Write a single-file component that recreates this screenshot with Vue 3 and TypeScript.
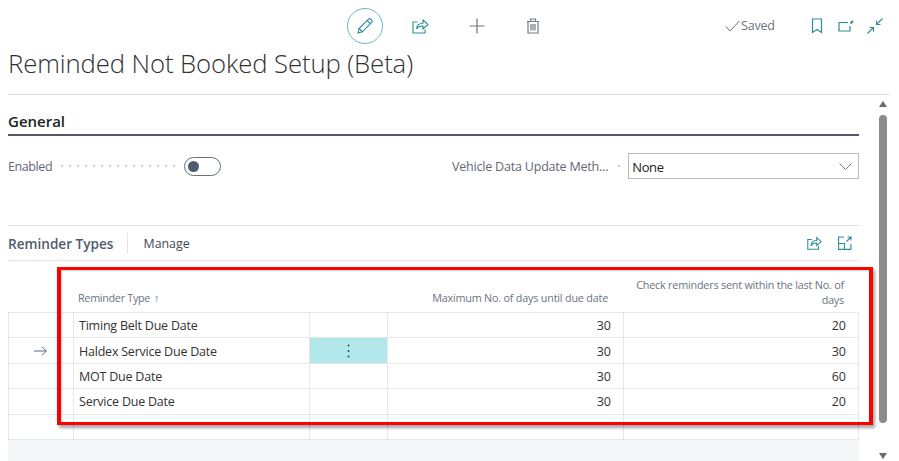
<script setup lang="ts">
interface Row {
  name: string
  max: number
  check: number
  current?: boolean
}
const rows: Row[] = [
  { name: 'Timing Belt Due Date', max: 30, check: 20 },
  { name: 'Haldex Service Due Date', max: 30, check: 30, current: true },
  { name: 'MOT Due Date', max: 30, check: 60 },
  { name: 'Service Due Date', max: 30, check: 20 },
]
</script>

<template>
  <div class="page">
    <header class="head">
      <div class="toolbar">
        <div class="actions">
          <span class="edit">
            <svg width="18" height="18" viewBox="0 0 18 18" fill="none" stroke="#2b8e96" stroke-width="1.1">
              <path d="M2 16l1-4.5L12.5 2.2c.6-.6 1.5-.6 2.1 0l1.1 1.1c.6.6.6 1.500 0 2.100L6.400 14.800z" />
              <path d="M3 11.500L6.500 15M11.200 3.500l3.300 3.300" />
            </svg>
          </span>
          <svg class="ic share" width="18" height="18" viewBox="0 0 18 18" fill="none" stroke="#2b8e96" stroke-width="1.1">
            <path d="M6.500 5H2v11h12v-3.500" />
            <path d="M5.500 12c.5-4 3.500-5.800 6.500-5.800V3l5 4.500-5 4.500V9c-2.500 0-5 .7-6.500 3z" />
          </svg>
          <svg class="ic plus" width="16" height="16" viewBox="0 0 16 16" stroke="#6d7683" stroke-width="1.200">
            <path d="M8 .5v15M.5 8h15" />
          </svg>
          <svg class="ic bin" width="14" height="16" viewBox="0 0 14 16" fill="none" stroke="#727b88" stroke-width="1.200">
            <path d="M2 3.500h10V15H2zM1 3.500h12M4.500 3.500V1h5v2.500" />
            <path d="M5 6v6.500M7 6v6.500M9 6v6.500" />
          </svg>
        </div>
        <div class="status">
          <svg width="15" height="12" viewBox="0 0 15 12" fill="none" stroke="#69727f" stroke-width="1">
            <path d="M1 6.500L5 11 14.500 1" />
          </svg>
          <span>Saved</span>
        </div>
        <div class="window">
          <svg width="12" height="16" viewBox="0 0 12 16" fill="none" stroke="#2b8e96" stroke-width="1.200">
            <path d="M1.500 1h9v13.500L6 11.500l-4.500 3z" />
          </svg>
          <svg width="16" height="12" viewBox="0 0 16 12" fill="none" stroke="#2b8e96" stroke-width="1.200">
            <path d="M10 2.500H1v8.500h11V6" />
            <path d="M12.500 3.500L15 1" stroke-width="2" />
          </svg>
          <svg width="16" height="16" viewBox="0 0 16 16" fill="none" stroke="#2b8e96" stroke-width="1.100">
            <path d="M15.500 .5L9.500 6.500M9.500 2.500v4h4M.5 15.500l6-6M2.500 9.500h4v4" />
          </svg>
        </div>
      </div>
      <h1>Reminded Not Booked Setup (Beta)</h1>
    </header>

    <div class="body">
      <main class="content">
        <section class="general">
          <h2>General</h2>
          <div class="fields">
            <div class="field enabled">
              <label>Enabled</label>
              <span class="dots"></span>
              <span class="toggle"><span class="knob"></span></span>
            </div>
            <div class="field method">
              <label>Vehicle Data Update Meth...</label>
              <span class="dots short"></span>
              <div class="select">
                <span>None</span>
                <svg width="13" height="7" viewBox="0 0 13 7" fill="none" stroke="#6d7683">
                  <path d="M.5 .5l6 6 6-6" />
                </svg>
              </div>
            </div>
          </div>
        </section>

        <section class="part">
          <div class="part-bar">
            <h3>Reminder Types</h3>
            <span class="sep"></span>
            <span class="manage">Manage</span>
            <span class="part-icons">
              <svg width="16" height="16" viewBox="0 0 18 18" fill="none" stroke="#2b8e96" stroke-width="1.200">
                <path d="M6.500 5H2v11h12v-3.500" />
                <path d="M5.500 12c.5-4 3.500-5.800 6.500-5.800V3l5 4.500-5 4.500V9c-2.500 0-5 .7-6.500 3z" />
              </svg>
              <svg width="14" height="14" viewBox="0 0 14 14" fill="none" stroke="#2b8e96" stroke-width="1.100">
                <path d="M6 1H.6v12.400H13V8M.6 7.500H6.500v5.900M8.500 5.500L13 1M9.500 1H13v3.500" />
              </svg>
            </span>
          </div>

          <div class="grid">
            <div class="row hdr">
              <div class="c"></div>
              <div class="c name">Reminder Type<span class="arrow">↑</span></div>
              <div class="c"></div>
              <div class="c num">Maximum No. of days until due date</div>
              <div class="c num wrap">Check reminders sent within the last No. of days</div>
            </div>
            <div v-for="r in rows" :key="r.name" class="row item">
              <div class="c mark">
                <svg v-if="r.current" width="13" height="10" viewBox="0 0 13 10" fill="none" stroke="#5f6874">
                  <path d="M0 5h12.300M8 .7L12.300 5 8 9.300" />
                </svg>
              </div>
              <div class="c text">{{ r.name }}</div>
              <div class="c menu" :class="{ on: r.current }">
                <svg v-if="r.current" class="kebab" width="3" height="14" viewBox="0 0 3 14" fill="#3c4650">
                  <circle cx="1.500" cy="1.500" r="1" />
                  <circle cx="1.500" cy="7" r="1" />
                  <circle cx="1.500" cy="12.500" r="1" />
                </svg>
              </div>
              <div class="c val">{{ r.max }}</div>
              <div class="c val">{{ r.check }}</div>
            </div>
            <div class="row item last">
              <div class="c"></div><div class="c"></div><div class="c"></div><div class="c"></div><div class="c"></div>
            </div>
          </div>
          <div class="rest"></div>
        </section>
      </main>

      <aside class="scroll">
        <span class="up"></span>
        <span class="thumb"></span>
        <span class="down"></span>
      </aside>
    </div>

    <div class="callout"></div>
  </div>
</template>

<style>
html, body { margin: 0; padding: 0; background: #fff; }
</style>

<style scoped>
.page {
  position: relative;
  width: 899px;
  height: 461px;
  overflow: hidden;
  background: #fff;
  font-family: "Open Sans", "Noto Sans", sans-serif;
  color: #333;
  display: flex;
  flex-direction: column;
}
.head {
  margin: 0 10px 0 8px;
  height: 95px;
  box-sizing: border-box;
  border-bottom: 1px solid #d9dadd;
  flex: none;
}
.toolbar {
  height: 46px;
  display: flex;
  align-items: center;
  padding-top: 5px;
  box-sizing: border-box;
}
.actions {
  display: flex;
  align-items: center;
  margin-left: 339px;
}
.edit {
  width: 34px;
  height: 34px;
  border: 1px solid #66bcc0;
  border-radius: 50%;
  display: flex;
  align-items: center;
  justify-content: center;
}
.share { margin-left: 28px; }
.plus { margin-left: 40px; }
.bin { margin-left: 41px; }
.status {
  display: flex;
  align-items: center;
  gap: 1px;
  margin-left: 185px;
  font-size: 12.500px;
  color: #69727f;
  letter-spacing: -.2px;
}
.window {
  display: flex;
  align-items: center;
  margin-left: 36px;
  gap: 15px;
}
.window svg:last-child { margin-left: -2px; }
h1 {
  margin: 0;
  padding-top: 1px;
  font-size: 25.700px;
  font-weight: 300;
  line-height: 34px;
  color: #323232;
  letter-spacing: -.1px;
}
.body {
  flex: 1;
  display: flex;
  min-height: 0;
}
.content {
  width: 851px;
  margin-left: 8px;
  flex: none;
}
.general { height: 130px; }
h2 {
  margin: 0;
  height: 41px;
  box-sizing: border-box;
  padding-top: 15px;
  font-size: 15px;
  line-height: 22px;
  font-weight: 600;
  color: #222;
  border-bottom: 2px solid #505c6d;
}
.fields {
  display: flex;
  margin-top: 17px;
}
.field {
  display: flex;
  align-items: center;
  height: 26px;
  font-size: 12.500px;
  color: #5f6875;
}
.field label { padding-top: 1px; }
.enabled { width: 444px; }
.enabled label { letter-spacing: -.4px; }
.method { flex: 1; }
.method label { letter-spacing: -.2px; }
.dots {
  flex: none;
  width: 120px;
  margin: 0 6px;
  height: 2px;
  background-image: radial-gradient(circle, #c9cdd3 .8px, transparent 1px);
  background-size: 8px 2px;
}
.dots.short { width: 6px; margin: 0 7px 0 7px; }
.toggle {
  width: 32px;
  height: 17px;
  border: 1px solid #69727f;
  border-radius: 10px;
  display: flex;
  align-items: center;
  padding-left: 3px;
  box-sizing: content-box;
}
.knob {
  width: 11px;
  height: 11px;
  background: #4f5b70;
  border-radius: 50%;
}
.select {
  flex: 1;
  height: 26px;
  box-sizing: border-box;
  border: 1px solid #b5bac2;
  display: flex;
  align-items: center;
  justify-content: space-between;
  padding: 1px 6px 0 3px;
  color: #222;
  font-size: 13px;
  letter-spacing: -.4px;
}
.part { border-top: 1px solid #e3e4e7; }
.part-bar {
  height: 35px;
  display: flex;
  align-items: center;
  border-bottom: 1px solid #e3e4e7;
  box-sizing: border-box;
}
h3 {
  margin: 0;
  font-size: 13.600px;
  font-weight: 600;
  color: #505c6d;
}
.sep {
  width: 1px;
  height: 20px;
  background: #e3e4e7;
  margin-left: 14px;
}
.manage {
  margin-left: 15px;
  font-size: 12.400px;
  color: #414a56;
}
.part-icons {
  margin-left: auto;
  margin-right: 7px;
  display: flex;
  align-items: center;
  gap: 16px;
}
.row {
  display: grid;
  grid-template-columns: 65px 236px 78px 236px 236px;
}
.hdr {
  height: 52px;
  font-size: 10.800px;
  letter-spacing: -.2px;
  color: #6b7482;
  border-bottom: 1px solid #e6e7ea;
  box-sizing: border-box;
}
.hdr .c {
  display: flex;
  align-items: flex-end;
  padding-bottom: 7px;
  box-sizing: border-box;
}
.hdr .name { padding-left: 5px; letter-spacing: -.3px; }
.arrow { margin-left: 4px; font-weight: 700; color: #505c6d; }
.hdr .num {
  justify-content: flex-end;
  text-align: right;
  padding-right: 15px;
  line-height: 15px;
}
.hdr .wrap { padding-bottom: 5px; }
.item {
  height: 25.400px;
  box-sizing: border-box;
  border-bottom: 1px solid #e6e7ea;
  border-right: 1px solid #e6e7ea;
  border-left: 1px solid #e6e7ea;
  font-size: 12.500px;
  color: #333;
  grid-template-columns: 64px 236px 78px 236px 235px;
}
.item .c {
  display: flex;
  align-items: center;
  box-sizing: border-box;
  border-left: 1px solid #e6e7ea;
  min-width: 0;
}
.item .c:first-child { border-left: 0; }
.mark { justify-content: flex-end; padding-right: 26px; }
.text { padding: 1px 0 0 5px; letter-spacing: -.22px; }
.val { justify-content: flex-end; padding: 1px 12px 0 0; }
.menu.on { background: #b2e8ec; justify-content: center; }
.rest { height: 30px; background: #f5f6f8; }
.scroll {
  position: relative;
  width: 11px;
  margin-left: 18px;
  display: flex;
  flex-direction: column;
  align-items: center;
  padding-top: 6px;
  box-sizing: border-box;
  height: 366px;
}
.up {
  width: 0; height: 0;
  border-left: 4.500px solid transparent;
  border-right: 4.500px solid transparent;
  border-bottom: 6px solid #6b6b6b;
}
.thumb {
  width: 8px;
  height: 308px;
  margin-top: 8px;
  background: #8b8b8b;
  border-radius: 4px;
}
.down {
  margin-top: auto;
  margin-bottom: 2px;
  width: 0; height: 0;
  border-left: 4.500px solid transparent;
  border-right: 4.500px solid transparent;
  border-top: 6px solid #6b6b6b;
}
.callout {
  position: absolute;
  left: 57px;
  top: 267px;
  width: 816px;
  height: 158px;
  box-sizing: border-box;
  border: 3px solid #f00;
  border-left-width: 4px;
  border-right-width: 4px;
  box-shadow: 2px 3px 3px rgba(0, 0, 0, .35), inset 1px 1px 2px rgba(0, 0, 0, .2);
}
</style>
